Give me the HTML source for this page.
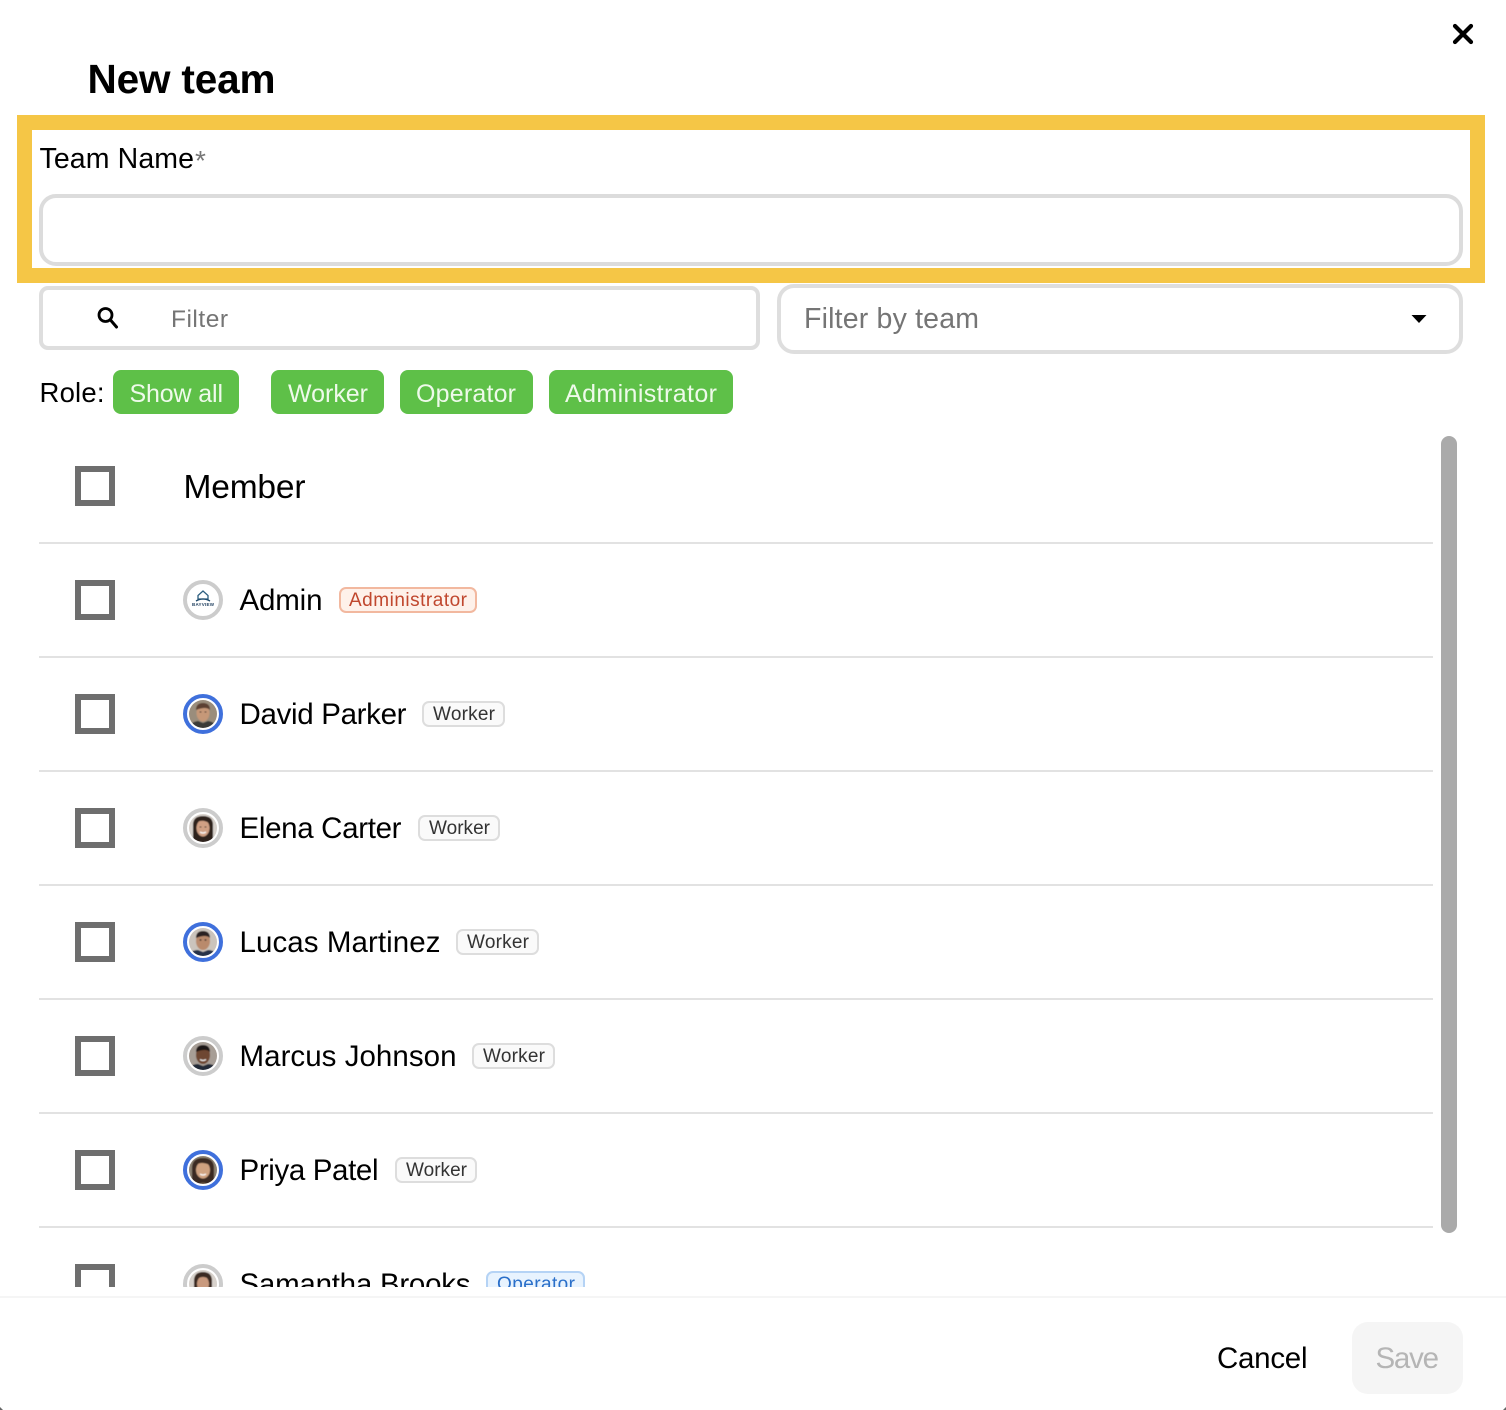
<!DOCTYPE html>
<html><head><meta charset="utf-8"><title>New team</title>
<style>
html,body{margin:0;padding:0;background:#fff;width:1506px;height:1410px;overflow:hidden}
svg{display:block}
text{font-family:"Liberation Sans",Arial,sans-serif;fill:#000}
.n{font-size:29.500px}
.b{font-size:19px;fill:#333}
.g{font-size:25px;fill:#eefaea}
.cb{fill:#fff;stroke:#6e6e6e;stroke-width:6}
.dv{fill:#e2e2e2}
</style></head><body>
<svg width="1506" height="1410" viewBox="0 0 1506 1410" xmlns="http://www.w3.org/2000/svg">
<defs>
<clipPath id="list"><rect x="0" y="430" width="1506" height="857"/></clipPath>
<filter id="bl" x="-20%" y="-20%" width="140%" height="140%"><feGaussianBlur stdDeviation="0.450"/></filter>
<clipPath id="av"><circle cx="0" cy="0" r="14"/></clipPath>
</defs>
<rect width="1506" height="1410" fill="#fff"/>

<!-- close -->
<path d="M1455 26L1471 42M1471 26L1455 42" stroke="#000" stroke-width="4.200" stroke-linecap="round"/>
<text x="87.500" y="93" font-size="40.500" font-weight="700" textLength="188">New team</text>

<!-- highlight -->
<rect x="24.500" y="122.500" width="1453" height="153" fill="#fff" stroke="#f5c646" stroke-width="15"/>
<text x="39.500" y="168" font-size="28.500" textLength="154.500">Team Name</text>
<text x="195" y="170" font-size="28" style="fill:#777">*</text>
<rect x="41" y="196" width="1420" height="68" rx="15" fill="#fff" stroke="#dcdcdc" stroke-width="4"/>

<!-- filter -->
<rect x="41" y="288" width="717" height="60" rx="7" fill="#fff" stroke="#dedede" stroke-width="4"/>
<circle cx="105.500" cy="315" r="6.500" fill="none" stroke="#000" stroke-width="2.800"/>
<path d="M110.500 320L116.500 327" stroke="#000" stroke-width="3" stroke-linecap="round"/>
<text x="171" y="327" font-size="24.500" textLength="57" style="fill:#757575">Filter</text>

<rect x="779" y="286" width="682" height="66" rx="15" fill="#fff" stroke="#dedede" stroke-width="4"/>
<text x="804" y="328" font-size="28.500" textLength="175" style="fill:#757575">Filter by team</text>
<path d="M1411.500 315H1426.500L1419 323Z" fill="#000"/>

<!-- role -->
<text x="39.500" y="402" font-size="27.500" textLength="65">Role:</text>
<rect x="113" y="370" width="126" height="44" rx="8" fill="#5ec048"/>
<text class="g" x="129.500" y="402" textLength="93.500">Show all</text>
<rect x="271" y="370" width="113" height="44" rx="8" fill="#5ec048"/>
<text class="g" x="288" y="402" textLength="80">Worker</text>
<rect x="400" y="370" width="133" height="44" rx="8" fill="#5ec048"/>
<text class="g" x="416" y="402" textLength="100">Operator</text>
<rect x="549" y="370" width="184" height="44" rx="8" fill="#5ec048"/>
<text class="g" x="565" y="402" textLength="152">Administrator</text>

<!-- scrollbar -->
<rect x="1441" y="436" width="16" height="797" rx="8" fill="#aaaaaa"/>

<g clip-path="url(#list)">
<!-- header -->
<rect class="cb" x="78" y="469" width="34" height="34"/>
<text x="183.500" y="498" font-size="33.500" textLength="122">Member</text>
<rect class="dv" x="39" y="542" width="1394" height="2"/>

<!-- Admin -->
<rect class="cb" x="78" y="583" width="34" height="34"/>
<g transform="translate(203,600)">
<circle r="18" fill="#fff" stroke="#cccccc" stroke-width="4"/>
<path d="M-5 -4.500L0 -9L5 -4.500V-1H-5Z" fill="none" stroke="#2d5f80" stroke-width="1.300"/>
<path d="M-7 1Q0 -3 7 1" stroke="#1f4a6b" stroke-width="1.300" fill="none"/>
<text x="0" y="6" font-size="4.500" font-weight="700" text-anchor="middle" textLength="22" style="fill:#1f3f5f">BAYVIEW</text>
</g>
<text class="n" x="239.500" y="610" textLength="83">Admin</text>
<rect x="340" y="588" width="136" height="24" rx="6" fill="#fef1ea" stroke="#f2b89f" stroke-width="2"/>
<text class="b" x="349" y="606" textLength="118" style="fill:#c0472e">Administrator</text>
<rect class="dv" x="39" y="656" width="1394" height="2"/>

<!-- David -->
<rect class="cb" x="78" y="697" width="34" height="34"/>
<g transform="translate(203,714)">
<circle r="18" fill="#fff" stroke="#3f70dc" stroke-width="4"/>
<g clip-path="url(#av)"><g filter="url(#bl)">
<rect x="-15" y="-15" width="30" height="30" fill="#9a8d7c"/>
<ellipse cx="0" cy="-1" rx="6.500" ry="8.500" fill="#c69878"/>
<path d="M-7 -4Q-7 -11 0 -11Q7 -11 7 -4Q3 -8 -7 -4Z" fill="#5b4030"/>
<path d="M-3.500 -2h2M1.500 -2h2" stroke="#3a2a20" stroke-width="1"/>
<path d="M-14 15Q-13 8 -5 7L0 9L5 7Q13 8 14 15Z" fill="#3a3a38"/>
</g></g></g>
<text class="n" x="239.500" y="724" textLength="167">David Parker</text>
<rect x="423" y="702" width="81" height="24" rx="6" fill="#fafafa" stroke="#dddddd" stroke-width="2"/>
<text class="b" x="433" y="720" textLength="62">Worker</text>
<rect class="dv" x="39" y="770" width="1394" height="2"/>

<!-- Elena -->
<rect class="cb" x="78" y="811" width="34" height="34"/>
<g transform="translate(203,828)">
<circle r="18" fill="#fff" stroke="#cccccc" stroke-width="4"/>
<g clip-path="url(#av)"><g filter="url(#bl)">
<rect x="-15" y="-15" width="30" height="30" fill="#d8d2cc"/>
<path d="M-10 15V-3Q-10 -12 0 -12Q10 -12 10 -3V15Z" fill="#2e221c"/>
<ellipse cx="0" cy="0" rx="6.500" ry="8.500" fill="#d0a084"/>
<path d="M-6 -6Q0 -9 6 -5Q6 -10 0 -10Q-6 -10 -6 -6Z" fill="#2e221c"/>
<path d="M-3.500 -1h2M1.500 -1h2" stroke="#3a2a20" stroke-width="1"/>
<path d="M-3 4Q0 6 3 4" stroke="#fff" stroke-width="1.200" fill="none"/>
</g></g></g>
<text class="n" x="239.500" y="838" textLength="162">Elena Carter</text>
<rect x="419" y="816" width="80" height="24" rx="6" fill="#fafafa" stroke="#dddddd" stroke-width="2"/>
<text class="b" x="429" y="834" textLength="61">Worker</text>
<rect class="dv" x="39" y="884" width="1394" height="2"/>

<!-- Lucas -->
<rect class="cb" x="78" y="925" width="34" height="34"/>
<g transform="translate(203,942)">
<circle r="18" fill="#fff" stroke="#3f70dc" stroke-width="4"/>
<g clip-path="url(#av)"><g filter="url(#bl)">
<rect x="-15" y="-15" width="30" height="30" fill="#cbc4bc"/>
<ellipse cx="0" cy="-1" rx="7" ry="9" fill="#b98a6c"/>
<path d="M-7 -4Q-7 -11 0 -11Q7 -11 7 -4Q3 -8 -7 -4Z" fill="#2a2320"/>
<path d="M-3.500 -2h2M1.500 -2h2" stroke="#2a2320" stroke-width="1.200"/>
<path d="M-14 15Q-13 8 -5 8L0 10L5 8Q13 8 14 15Z" fill="#27324a"/>
</g></g></g>
<text class="n" x="239.500" y="952" textLength="201">Lucas Martinez</text>
<rect x="457" y="930" width="81" height="24" rx="6" fill="#fafafa" stroke="#dddddd" stroke-width="2"/>
<text class="b" x="467" y="948" textLength="62">Worker</text>
<rect class="dv" x="39" y="998" width="1394" height="2"/>

<!-- Marcus -->
<rect class="cb" x="78" y="1039" width="34" height="34"/>
<g transform="translate(203,1056)">
<circle r="18" fill="#fff" stroke="#cccccc" stroke-width="4"/>
<g clip-path="url(#av)"><g filter="url(#bl)">
<rect x="-15" y="-15" width="30" height="30" fill="#a79e96"/>
<ellipse cx="0" cy="-1" rx="7" ry="9" fill="#6e4630"/>
<path d="M-7 -4Q-7 -11 0 -11Q7 -11 7 -4Q3 -8 -7 -4Z" fill="#1c1512"/>
<path d="M-3 3.500Q0 5.500 3 3.500" stroke="#eee" stroke-width="1.200" fill="none"/>
<path d="M-14 15Q-13 8 -5 8L0 10L5 8Q13 8 14 15Z" fill="#232a38"/>
</g></g></g>
<text class="n" x="239.500" y="1066" textLength="217">Marcus Johnson</text>
<rect x="473" y="1044" width="81" height="24" rx="6" fill="#fafafa" stroke="#dddddd" stroke-width="2"/>
<text class="b" x="483" y="1062" textLength="62">Worker</text>
<rect class="dv" x="39" y="1112" width="1394" height="2"/>

<!-- Priya -->
<rect class="cb" x="78" y="1153" width="34" height="34"/>
<g transform="translate(203,1170)">
<circle r="18" fill="#fff" stroke="#3f70dc" stroke-width="4"/>
<g clip-path="url(#av)"><g filter="url(#bl)">
<rect x="-15" y="-15" width="30" height="30" fill="#8d8272"/>
<path d="M-11 15V-2Q-11 -12 0 -12Q11 -12 11 -2V15Z" fill="#3a2a20"/>
<ellipse cx="0" cy="0" rx="7" ry="8.500" fill="#cfa280"/>
<path d="M-7 -5Q-2 -9 7 -5Q6 -10 0 -10Q-6 -10 -7 -5Z" fill="#3a2a20"/>
<path d="M-3 4Q0 6 3 4" stroke="#fff" stroke-width="1.200" fill="none"/>
<path d="M-5 15Q0 10 5 15Z" fill="#6c5844"/>
</g></g></g>
<text class="n" x="239.500" y="1180" textLength="139">Priya Patel</text>
<rect x="396" y="1158" width="80" height="24" rx="6" fill="#fafafa" stroke="#dddddd" stroke-width="2"/>
<text class="b" x="406" y="1176" textLength="61">Worker</text>
<rect class="dv" x="39" y="1226" width="1394" height="2"/>

<!-- Samantha -->
<rect class="cb" x="78" y="1267" width="34" height="34"/>
<g transform="translate(203,1284)">
<circle r="18" fill="#fff" stroke="#cccccc" stroke-width="4"/>
<g clip-path="url(#av)"><g filter="url(#bl)">
<rect x="-15" y="-15" width="30" height="30" fill="#d8d2cc"/>
<path d="M-9 15V-3Q-9 -12 0 -12Q9 -12 9 -3V15Z" fill="#3a2a22"/>
<ellipse cx="0" cy="0" rx="6" ry="8" fill="#c99a7e"/>
<path d="M-6 -5Q0 -9 6 -5Q6 -10 0 -10Q-6 -10 -6 -5Z" fill="#3a2a22"/>
</g></g></g>
<text class="n" x="239.500" y="1294" textLength="231">Samantha Brooks</text>
<rect x="487" y="1272" width="97" height="24" rx="6" fill="#e8f3fe" stroke="#b5d3f5" stroke-width="2"/>
<text class="b" x="497" y="1290" textLength="78" style="fill:#2a6fc9">Operator</text>
</g>

<!-- footer -->
<rect x="0" y="1296" width="1506" height="2" fill="#f5f5f5"/>
<text x="1217" y="1368" font-size="29.500" textLength="90.500">Cancel</text>
<rect x="1352" y="1322" width="111" height="72" rx="16" fill="#f5f5f5"/>
<text x="1375.500" y="1368" font-size="29.500" textLength="63.500" style="fill:#b5b5b5">Save</text>
<path d="M1506 1407V1410H1503Z" fill="#666"/>
<path d="M0 1407V1410H3Z" fill="#666"/>
</svg>
</body></html>
